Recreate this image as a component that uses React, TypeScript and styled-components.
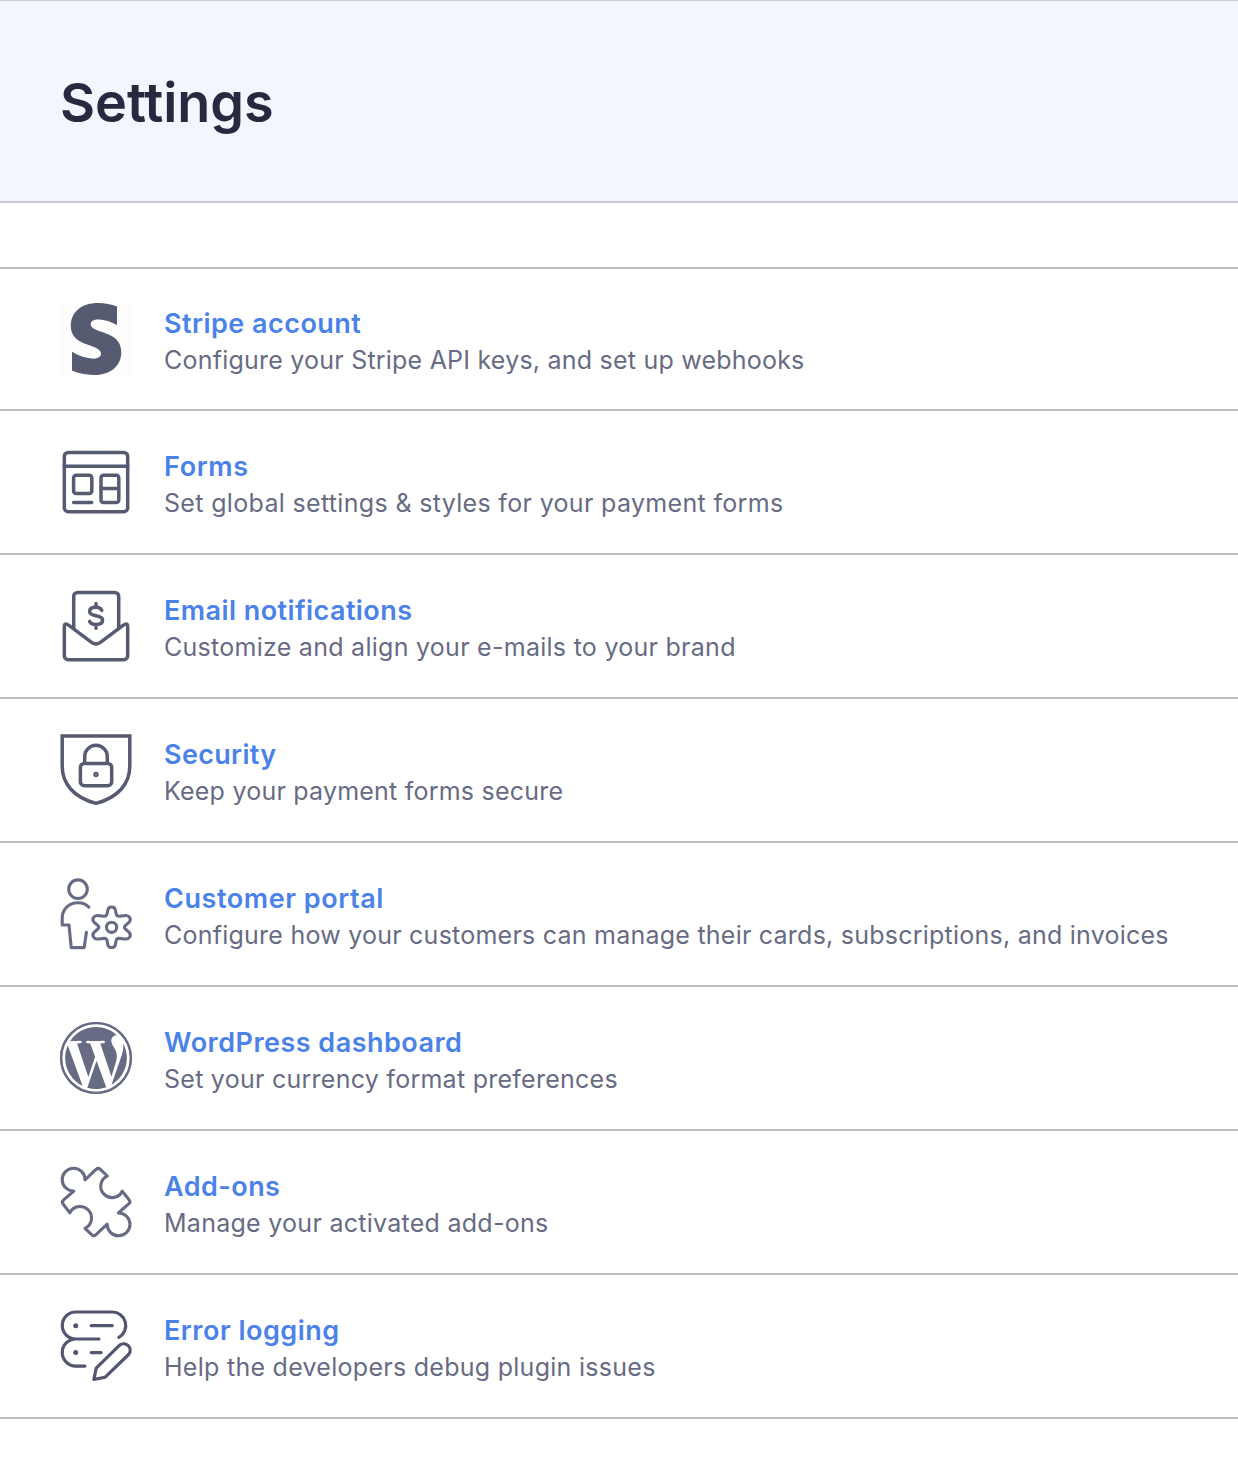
import React from "react";
import styled, { createGlobalStyle } from "styled-components";
import { FaWordpress } from "react-icons/fa";

const GlobalStyle = createGlobalStyle`
  *, *::before, *::after { box-sizing: border-box; }
  body {
    margin: 0;
    background: #ffffff;
    font-family: Inter, "Liberation Sans", sans-serif;
    -webkit-font-smoothing: antialiased;
  }
`;

const Page = styled.main`
  min-height: 1474px;
  background: #ffffff;
`;

const Header = styled.header`
  display: flex;
  align-items: center;
  height: 203px;
  padding: 3px 60px 0;
  background: #f2f6ff;
  border-top: 1px solid #c9ccd6;
  border-bottom: 2px solid #c6c9d3;
`;

const Heading = styled.h1`
  margin: 0;
  color: #28293f;
  font-size: 54px;
  font-weight: 600;
  line-height: 68px;
  letter-spacing: -0.05px;
`;

const List = styled.ul`
  list-style: none;
  margin: 64px 0 0;
  padding: 0;
  border-top: 2px solid #b9bec4;
`;

const Row = styled.li`
  display: flex;
  align-items: center;
  gap: 32px;
  height: 144px;
  padding: 0 60px;
  border-bottom: 2px solid #b9bec4;

  &:first-child {
    height: 142px;
  }
`;

const IconBox = styled.span<{ $tint?: string; $color?: string }>`
  display: flex;
  flex: none;
  width: 72px;
  height: 72px;
  color: ${(p) => p.$color ?? "#565b72"};
  background: ${(p) => p.$tint ?? "transparent"};

  > svg {
    display: block;
    width: 72px;
    height: 72px;
    overflow: visible;
  }
`;

const Copy = styled.div`
  display: flex;
  flex-direction: column;
  padding-top: 4px;
  white-space: nowrap;
`;

const Title = styled.a<{ $track: number }>`
  color: #4b82e8;
  font-size: 27px;
  font-weight: 600;
  line-height: 37px;
  letter-spacing: ${(p) => p.$track}px;
  text-decoration: none;
`;

const Description = styled.p<{ $track: number }>`
  margin: 0;
  color: #676b83;
  font-size: 25px;
  font-weight: 400;
  line-height: 36px;
  letter-spacing: ${(p) => p.$track}px;
`;

const Line = ({ width = 3.5, children }: { width?: number; children: React.ReactNode }) => (
  <svg viewBox="0 0 72 72" fill="none" stroke="currentColor" strokeWidth={width} strokeLinecap="round" strokeLinejoin="round">
    {children}
  </svg>
);

const StripeIcon = () => (
  <svg viewBox="0 0 72 72" fill="currentColor">
    <path d="M57 3.6V22C50.5 18.5 45 16.8 39 16.5C34 16.3 30.7 17.8 30.7 21.2C30.7 31 61.3 26.5 61.3 49C61.3 64 49.5 72 33.5 72C26 72 18.5 70.5 12 67.6V48.8C18.5 52.7 25.5 55.2 32 55.6C37.5 56 41 54.3 41 50.6C41 40.5 10.8 44.5 10.8 23C10.8 8.2 22.5 0 38 0C45 0 51.5 1.2 57 3.6Z" />
  </svg>
);

const FormsIcon = () => (
  <Line>
    <rect x="4.3" y="6.4" width="63.4" height="59.3" rx="4" />
    <path d="M4.3 20.3H67.7M13.6 56.4H31.7M41.2 42.4H58.6" />
    <rect x="13.6" y="29.2" width="18.2" height="18.2" rx="2.5" />
    <rect x="41" y="29.2" width="17.8" height="27.2" rx="2.5" />
  </Line>
);

const EmailIcon = () => (
  <Line>
    <path d="M13.7 38V6.4A4 4 0 0 1 17.7 2.4H54.7A4 4 0 0 1 58.7 6.4V38" />
    <path d="M8.6 35.2L31.6 52.4Q36 55.6 40.4 52.4L63.4 35.2Q67.7 32 67.7 37V65.7A4 4 0 0 1 63.7 69.7H8.3A4 4 0 0 1 4.3 65.7V37Q4.3 32 8.6 35.2Z" />
    <path d="M41.8 20.4C40.8 18.2 38.9 17.3 36 17.3C32.2 17.3 29.6 18.8 29.6 21.5C29.6 24.2 32.4 25 36 25.8C39.8 26.6 42.6 27.4 42.6 30.2C42.6 33 39.8 34.4 36 34.4C32.6 34.4 30.4 33.4 29.6 31.3M36 13.6V17M36 34.7V38.3" />
  </Line>
);

const SecurityIcon = () => (
  <Line>
    <path d="M2.2 2.1H69.8V32C69.8 50 58 63.5 36 69.4C14 63.5 2.2 50 2.2 32Z" strokeLinejoin="miter" />
    <path d="M24.7 29.3V22.6A11.3 11.3 0 0 1 47.3 22.6V29.3" />
    <rect x="20.4" y="29.4" width="31.3" height="22.4" rx="4" />
    <circle cx="36" cy="40.4" r="1.6" strokeWidth="2.2" />
  </Line>
);

const CustomerIcon = () => (
  <Line width={3.1}>
    <circle cx="18" cy="11.2" r="9.3" />
    <path d="M28.9 29.2C26 26 22.5 24.8 18 24.8C8.5 24.8 2.2 31.5 2.2 40.5V47H9L11.2 69.6H24.2L26.4 54.2" />
    <circle cx="51.6" cy="49.3" r="5.1" />
    <path d="M47.8 32.2C48.5 28 54.7 28 55.4 32.2L56.1 35.8Q56.6 38.4 59.2 38.2L64.8 37.6C69.4 37 72 41.3 68.9 44.4L65.3 47.6Q63.6 49.3 65.3 51L68.9 54.2C72 57.3 69.4 61.6 64.8 61L59.2 60.4Q56.6 60.2 56.1 62.8L55.4 66.4C54.7 70.6 48.5 70.6 47.8 66.4L47.1 62.8Q46.6 60.2 44 60.4L38.4 61C33.8 61.6 31.2 57.3 34.3 54.2L37.9 51Q39.6 49.3 37.9 47.6L34.3 44.4C31.2 41.3 33.8 37 38.4 37.6L44 38.2Q46.6 38.4 47.1 35.8Z" />
  </Line>
);

const WordPressIcon = () => (
  <svg viewBox="0 0 72 72">
    <FaWordpress x={-1.16} y={-1.16} size={74.32} />
    <circle cx="36" cy="36" r="34.8" fill="none" stroke="currentColor" strokeWidth="2.3" />
  </svg>
);

const AddonsIcon = () => (
  <Line width={3.1}>
    <path d="M25 13.8A11.4 11.4 0 1 0 13.8 25L3.4 34.2Q1.4 36.2 3.4 38.4L9.8 46.8A11.5 11.5 0 1 1 25 62.4L31.6 68.6Q33.8 70.8 36 68.6L47.2 58.2A11.4 11.4 0 1 0 58.4 47L68.9 37.7Q70.9 35.7 68.9 33.4L62.2 25.2A11.3 11.3 0 1 1 47.3 10L40.4 3.4Q38.2 1.4 36 3.4Z" />
  </Line>
);

const LoggingIcon = () => (
  <Line width={3.2}>
    <path d="M39 29H15.8A13.5 13.5 0 0 1 15.8 2H52.2A13.5 13.5 0 0 1 58.8 27.3M15.8 29A13.5 13.5 0 0 0 15.8 56.1H25M31.2 15.7H52.2M31.2 42.6H41" />
    <path d="M36.2 58.1L59.4 35.3C65.5 30.3 73.6 38.4 68.6 44.5L45.2 67.2L33.9 69.4Z" />
    <circle cx="15.7" cy="15.7" r="2.5" fill="currentColor" stroke="none" />
    <circle cx="15.7" cy="42.6" r="2.5" fill="currentColor" stroke="none" />
  </Line>
);

interface Setting {
  title: string;
  text: string;
  icon: React.ReactNode;
  color?: string;
  tint?: string;
  titleTrack: number;
  textTrack: number;
}

const settings: Setting[] = [
  { title: "Stripe account", text: "Configure your Stripe API keys, and set up webhooks", icon: <StripeIcon />, tint: "#fdfdfe", titleTrack: 0.47, textTrack: 0.22 },
  { title: "Forms", text: "Set global settings & styles for your payment forms", icon: <FormsIcon />, titleTrack: 0.65, textTrack: 0.33 },
  { title: "Email notifications", text: "Customize and align your e-mails to your brand", icon: <EmailIcon />, titleTrack: 0.43, textTrack: 0.27 },
  { title: "Security", text: "Keep your payment forms secure", icon: <SecurityIcon />, titleTrack: 0.33, textTrack: 0.22 },
  { title: "Customer portal", text: "Configure how your customers can manage their cards, subscriptions, and invoices", icon: <CustomerIcon />, color: "#676b83", titleTrack: 0.56, textTrack: 0.235 },
  { title: "WordPress dashboard", text: "Set your currency format preferences", icon: <WordPressIcon />, color: "#676b83", titleTrack: 0.48, textTrack: 0.26 },
  { title: "Add-ons", text: "Manage your activated add-ons", icon: <AddonsIcon />, color: "#676b83", titleTrack: 0.44, textTrack: 0.27 },
  { title: "Error logging", text: "Help the developers debug plugin issues", icon: <LoggingIcon />, color: "#52566e", titleTrack: 0.5, textTrack: 0.275 },
];

export default function App() {
  return (
    <Page>
      <GlobalStyle />
      <Header>
        <Heading>Settings</Heading>
      </Header>
      <List>
        {settings.map((s) => (
          <Row key={s.title}>
            <IconBox $color={s.color} $tint={s.tint}>{s.icon}</IconBox>
            <Copy>
              <Title $track={s.titleTrack}>{s.title}</Title>
              <Description $track={s.textTrack}>{s.text}</Description>
            </Copy>
          </Row>
        ))}
      </List>
    </Page>
  );
}
